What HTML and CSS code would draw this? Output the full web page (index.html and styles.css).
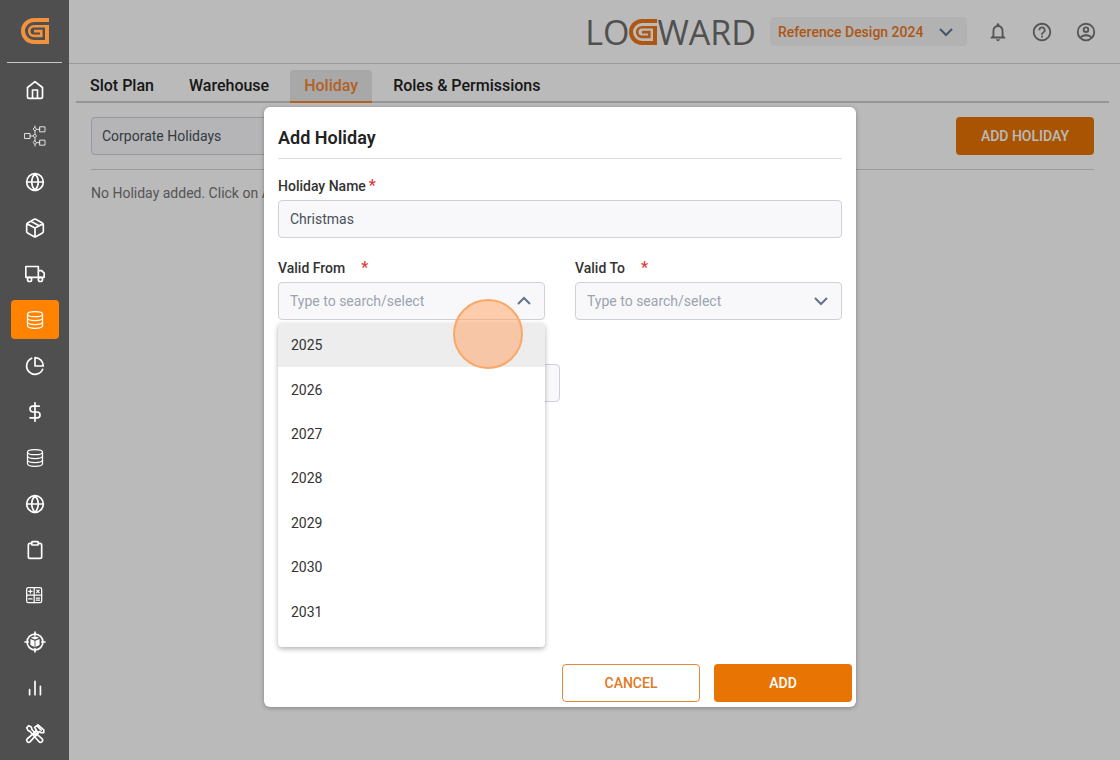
FILE: index.html
```html
<!DOCTYPE html>
<html lang="en">
<head>
<meta charset="utf-8">
<title>Logward – Holiday</title>
<link rel="stylesheet" href="styles.css">
</head>
<body>
<svg class="defs" aria-hidden="true">
  <symbol id="g-mark" viewBox="0 0 28 26">
    <path d="M28 2H13a11 11 0 0 0 0 22H26V7" fill="none" stroke="currentColor" stroke-width="4"/>
    <path d="M27 8.300H13a4.800 4.800 0 0 0 0 9.600H20.300V13.100H13" fill="none" stroke="currentColor" stroke-width="2.600"/>
  </symbol>
  <symbol id="globe" viewBox="0 0 24 24"><circle cx="12" cy="12" r="10"/><path d="M2 12h20M12 2a15.300 15.300 0 0 1 4 10 15.300 15.300 0 0 1-4 10 15.300 15.300 0 0 1-4-10 15.300 15.300 0 0 1 4-10z"/></symbol>
  <symbol id="database" viewBox="0 0 24 24"><ellipse cx="12" cy="5" rx="9" ry="3"/><path d="M3 5v14c0 1.700 4 3 9 3s9-1.300 9-3V5M3 9.700c0 1.700 4 3 9 3s9-1.300 9-3M3 14.400c0 1.700 4 3 9 3s9-1.300 9-3"/></symbol>
  <symbol id="chevron-down" viewBox="0 0 16 16"><path d="M2 5l6 6 6-6"/></symbol>
  <symbol id="chevron-up" viewBox="0 0 16 16"><path d="M2 11l6-6 6 6"/></symbol>
</svg>
<div class="app">
  <nav class="sidebar" aria-label="Main">
    <a class="brand" href="#" aria-label="Logward"><svg><use href="#g-mark"/></svg></a>
    <div class="side-list">
      <a class="side-item" href="#" aria-label="Home"><svg viewBox="0 0 24 24"><path d="M3 9l9-7 9 7v11a2 2 0 0 1-2 2H5a2 2 0 0 1-2-2zM9 22v-10h6v10"/></svg></a>
      <a class="side-item" href="#" aria-label="Workflow"><svg class="thin" viewBox="0 0 24 24"><path d="M0 9h6v6H0zM18 1h6v6h-6zM18 17h6v6h-6zM6 12h4M14 4h4M14 20h4M12 6v4M12 14v4M12 0v2M12 22v2M12 2l2 2-2 2-2-2zM12 10l2 2-2 2-2-2zM12 18l2 2-2 2-2-2z"/></svg></a>
      <a class="side-item" href="#" aria-label="Network"><svg><use href="#globe"/></svg></a>
      <a class="side-item" href="#" aria-label="Packages"><svg viewBox="0 0 24 24"><path d="M12.900 1.500l7.900 4.400A2 2 0 0 1 22 7.700v8.600a2 2 0 0 1-1.100 1.800l-8 4.400a2 2 0 0 1-1.800 0l-8-4.400A2 2 0 0 1 2 16.300V7.700a2 2 0 0 1 1.100-1.800l8-4.400a2 2 0 0 1 1.800 0zM2.300 6.800L12 12l9.700-5.200M12 22.700V12M7 3.900l10 5.400"/></svg></a>
      <a class="side-item" href="#" aria-label="Transport"><svg viewBox="0 0 24 24"><path d="M1 3h15v13H1zM16 8h4l3 3v5h-7z"/><circle cx="5.500" cy="18.500" r="2.500"/><circle cx="18.500" cy="18.500" r="2.500"/></svg></a>
      <a class="side-item active" href="#" aria-label="Master data"><svg class="light"><use href="#database"/></svg></a>
      <a class="side-item" href="#" aria-label="Reports"><svg viewBox="0 0 24 24"><path d="M21.200 15.900A10 10 0 1 1 8 2.800M22 12A10 10 0 0 0 12 2v10z"/></svg></a>
      <a class="side-item" href="#" aria-label="Costs"><svg viewBox="0 0 24 24"><path d="M12 1v22M17 5H9.500a3.500 3.500 0 0 0 0 7h5a3.500 3.500 0 0 1 0 7H6"/></svg></a>
      <a class="side-item" href="#" aria-label="Data"><svg class="light"><use href="#database"/></svg></a>
      <a class="side-item" href="#" aria-label="Regions"><svg><use href="#globe"/></svg></a>
      <a class="side-item" href="#" aria-label="Tasks"><svg viewBox="0 0 24 24"><path d="M16 4h2a2 2 0 0 1 2 2v14a2 2 0 0 1-2 2H6a2 2 0 0 1-2-2V6a2 2 0 0 1 2-2h2"/><rect x="8" y="2" width="8" height="4" rx="1"/></svg></a>
      <a class="side-item" href="#" aria-label="Calculator"><svg class="light" viewBox="0 0 24 24"><rect x="2" y="2" width="18" height="18" rx="2"/><path d="M11 2v18M2 11h18M4.500 6.500h4M6.500 4.500v4M14 5l3 3M17 5l-3 3M4.500 15.500h4M13.500 14.500h4M13.500 17h4"/></svg></a>
      <a class="side-item" href="#" aria-label="Tracking"><svg viewBox="0 0 24 24"><circle cx="12" cy="12" r="9.500"/><path d="M12 0v4M12 20v4M0 12h4M20 12h4"/><path class="solid" d="M12 5l5 2-5 2-5-2zM6.500 8.400l5 2v7.600l-5-2.500zM17.500 8.400l-5 2v7.600l5-2.500z"/></svg></a>
      <a class="side-item" href="#" aria-label="Analytics"><svg viewBox="0 0 24 24"><path d="M5.500 20v-6M12 20V4M18.500 20V10"/></svg></a>
      <a class="side-item" href="#" aria-label="Tools"><svg viewBox="0 0 24 24"><path d="M2 4.500L4.500 2l3 1.500L8.500 7 20.800 18a2.600 2.600 0 0 1-3.600 3.600L6 9 3.500 7.500z"/><path d="M11.500 4l4-3 3.500 3 3.500 3v3.500h-3L17 9 6 21.500A2.500 2.500 0 0 1 2.500 18L14 8zM15 3l4.500 4.500M10 11l4 3M13 8l3 3"/></svg></a>
    </div>
  </nav>

  <div class="page">
    <header class="topbar">
      <div class="logo" aria-label="Logward"><span>LO</span><svg><use href="#g-mark"/></svg><span>WARD</span></div>
      <div class="tenant">
        <select class="tenant-select" aria-label="Organisation"><option>Reference Design 2024</option></select>
        <svg class="chevron"><use href="#chevron-down"/></svg>
      </div>
      <button class="icon-btn" aria-label="Notifications"><svg viewBox="0 0 24 24"><path d="M12 22c1.100 0 2-.9 2-2h-4c0 1.100.9 2 2 2zm6-6v-5c0-3.100-1.600-5.600-4.500-6.300V4c0-.8-.7-1.500-1.500-1.500s-1.500.7-1.500 1.500v.7C7.600 5.400 6 7.900 6 11v5l-2 2v1h16v-1l-2-2zm-2 1H8v-6c0-2.500 1.500-4.500 4-4.500s4 2 4 4.500v6z"/></svg></button>
      <button class="icon-btn" aria-label="Help"><svg viewBox="0 0 24 24"><path d="M11 18h2v-2h-2v2zm1-16C6.500 2 2 6.500 2 12s4.500 10 10 10 10-4.500 10-10S17.500 2 12 2zm0 18c-4.400 0-8-3.600-8-8s3.600-8 8-8 8 3.600 8 8-3.600 8-8 8zm0-14c-2.200 0-4 1.800-4 4h2c0-1.100.9-2 2-2s2 .9 2 2c0 2-3 1.800-3 5h2c0-2.300 3-2.500 3-5 0-2.200-1.800-4-4-4z"/></svg></button>
      <button class="icon-btn" aria-label="Account"><svg viewBox="0 0 24 24"><path fill-rule="evenodd" d="M12 2a10 10 0 1 0 0 20 10 10 0 0 0 0-20zM7.100 18.300c.4-.9 3-1.800 4.900-1.800s4.500.9 4.900 1.800a8 8 0 0 1-9.800 0zm11.200-1.400c-1.400-1.800-4.900-2.400-6.300-2.400s-4.900.6-6.300 2.400a8 8 0 1 1 12.600 0zM12 6a3.500 3.500 0 1 0 0 7 3.500 3.500 0 0 0 0-7zm0 5a1.500 1.500 0 1 1 0-3 1.500 1.500 0 0 1 0 3z"/></svg></button>
    </header>

    <nav class="tabs" aria-label="Sections">
      <a class="tab" href="#">Slot Plan</a>
      <a class="tab" href="#">Warehouse</a>
      <a class="tab selected" href="#">Holiday</a>
      <a class="tab" href="#">Roles &amp; Permissions</a>
    </nav>

    <main class="content">
      <div class="filters">
        <select class="control filter" aria-label="Holiday calendar"><option>Corporate Holidays</option></select>
        <button class="btn primary">ADD HOLIDAY</button>
      </div>
      <p class="empty">No Holiday added. Click on Add</p>
    </main>
    <div class="backdrop"></div>
  </div>
</div>

<div class="modal-layer">
  <form class="modal" role="dialog" aria-labelledby="modal-title">
    <h2 class="modal-title" id="modal-title">Add Holiday</h2>
    <div class="fields">
      <div class="field wide">
        <div class="label-row tight"><label for="name">Holiday Name</label><span class="required">*</span></div>
        <input class="control" id="name" type="text" value="Christmas">
      </div>
      <div class="field">
        <div class="label-row"><label for="from">Valid From</label><span class="required">*</span></div>
        <div class="combo">
          <input class="control" id="from" type="text" placeholder="Type to search/select">
          <svg class="chevron"><use href="#chevron-up"/></svg>
          <ul class="menu" role="listbox" aria-label="Valid From">
            <li class="option current" role="option">2025</li>
            <li class="option" role="option">2026</li>
            <li class="option" role="option">2027</li>
            <li class="option" role="option">2028</li>
            <li class="option" role="option">2029</li>
            <li class="option" role="option">2030</li>
            <li class="option" role="option">2031</li>
          </ul>
          <span class="pointer"></span>
        </div>
      </div>
      <div class="field">
        <div class="label-row"><label for="to">Valid To</label><span class="required">*</span></div>
        <div class="combo">
          <input class="control" id="to" type="text" placeholder="Type to search/select">
          <svg class="chevron"><use href="#chevron-down"/></svg>
        </div>
      </div>
    </div>
    <div class="half"><input class="control" type="text" aria-label="Details"></div>
    <div class="actions">
      <button class="btn outline" type="button">CANCEL</button>
      <button class="btn primary" type="button">ADD</button>
    </div>
  </form>
</div>
</body>
</html>
```

FILE: styles.css
```css
* { box-sizing: border-box; }
body { margin: 0; font-family: Roboto, "Liberation Sans", sans-serif; font-size: 14px; color: #222; background: #fff; }
a { color: inherit; text-decoration: none; }
button, input, select { font: inherit; }
button { border: 0; background: none; padding: 0; }
.defs { position: absolute; width: 0; height: 0; }

.app { display: flex; min-height: 100vh; }

.sidebar { width: 69px; flex: none; background: #4f4f4f; color: #fff; display: flex; flex-direction: column; padding: 0 7px; }
.brand { height: 63px; display: flex; align-items: center; justify-content: center; color: #f0923e; border-bottom: 1px solid #c8c8c8; }
.brand svg { width: 28px; height: 26px; }
.side-list { display: flex; flex-direction: column; align-items: center; gap: 7px; padding-top: 7px; }
.side-item { width: 48px; height: 39px; border-radius: 4px; display: flex; align-items: center; justify-content: center; }
.side-item.active { background: #ff8200; }
.side-item svg { width: 20px; height: 20px; fill: none; stroke: currentColor; stroke-width: 2; stroke-linecap: round; stroke-linejoin: round; overflow: visible; }
.side-item .thin { stroke-width: 1; }
.side-item .light { stroke-width: 1.5; }
.side-item .solid { fill: currentColor; stroke: none; }

.page { flex: 1; min-width: 0; position: relative; }
.backdrop { position: absolute; inset: 0; background: rgba(0, 0, 0, 0.27); }

.topbar { height: 64px; border-bottom: 1px solid #d4d4d4; display: flex; align-items: center; justify-content: flex-end; padding-right: 23px; }
.logo { display: flex; align-items: center; font-family: "Open Sans", "Noto Sans", sans-serif; font-size: 34px; line-height: 36px; color: #6e6e6e; margin-right: 14px; }
.logo svg { width: 28px; height: 26px; color: #f07818; }
.tenant { position: relative; width: 197px; margin-right: 20px; }
.tenant-select { appearance: none; width: 100%; height: 29px; border: 0; border-radius: 4px; background: #f5f5f5; color: #ee7720; font-size: 14px; font-weight: 500; padding: 0 8px; }
.chevron { position: absolute; right: 13px; top: 50%; width: 16px; height: 16px; margin-top: -8px; fill: none; stroke: #64748b; stroke-width: 2; }
.icon-btn { width: 22px; height: 22px; margin-left: 22px; }
.tenant + .icon-btn { margin-left: 0; }
.icon-btn svg { display: block; width: 22px; height: 22px; fill: #757575; }

.tabs { display: flex; gap: 7px; margin: 6px 11px 0 7px; border-bottom: 2px solid #ccc; }
.tab { height: 33px; line-height: 32px; padding: 0 14px; font-size: 16px; font-weight: 500; margin-bottom: -2px; border-radius: 4px 4px 0 0; }
.tab.selected { background: #e6e6e6; color: #f58634; border-bottom: 2px solid #f58634; }

.content { padding: 14px 26px 0 22px; }
.filters { display: flex; justify-content: space-between; padding-bottom: 14px; border-bottom: 1px solid #d4d4d4; }
.control { appearance: none; width: 100%; height: 38px; border: 1px solid #cdd1d8; border-radius: 4px; background: #f8f8fb; color: #495057; padding: 0 11px; display: block; outline: 0; }
.control::placeholder { color: #9ca3af; opacity: 1; }
.filter { width: 300px; padding: 0 10px; }
.empty { margin: 13px 0 0; line-height: 20px; color: #757575; }
.btn { width: 138px; height: 38px; border-radius: 4px; font-weight: 500; }
.primary { background: #e87404; color: #fff; }
.outline { border: 1px solid #e08a3c; background: #fff; color: #e07a24; }

.modal-layer { position: absolute; inset: 0; display: flex; justify-content: center; align-items: flex-start; padding-top: 107px; }
.modal { width: 592px; min-height: 600px; background: #fff; border-radius: 6px; box-shadow: 0 1px 4px rgba(0, 0, 0, 0.3); padding: 0 14px; display: flex; flex-direction: column; }
.modal-title { margin: 0; height: 52px; line-height: 62px; font-size: 18px; font-weight: 600; border-bottom: 1px solid #ddd; }
.fields { display: grid; grid-template-columns: 1fr 1fr; column-gap: 30px; row-gap: 20px; padding-top: 17px; }
.wide { grid-column: 1 / -1; }
.label-row { display: flex; gap: 16px; line-height: 20px; padding-bottom: 4px; font-weight: 500; color: #333; }
.label-row.tight { gap: 3px; }
.required { color: #e53935; font-size: 16px; }
.combo { position: relative; }
.menu { position: absolute; left: 0; right: 0; top: 41px; z-index: 1; height: 324px; margin: 0; padding: 0 0 13px; list-style: none; background: #fff; border-radius: 4px; box-shadow: 0 2px 5px rgba(0, 0, 0, 0.3); display: flex; flex-direction: column; overflow: hidden; }
.option { flex: 1; display: flex; align-items: center; padding-left: 13px; color: #333; }
.option.current { background: #ededed; }
.pointer { position: absolute; z-index: 2; right: 22px; top: 17px; width: 70px; height: 70px; border-radius: 50%; border: 2px solid #f9a868; background: rgba(255, 160, 96, 0.5); }
.half { width: 50%; margin-top: 44px; }
.actions { display: flex; justify-content: flex-end; gap: 14px; margin: auto -10px 5px 0; }
```
